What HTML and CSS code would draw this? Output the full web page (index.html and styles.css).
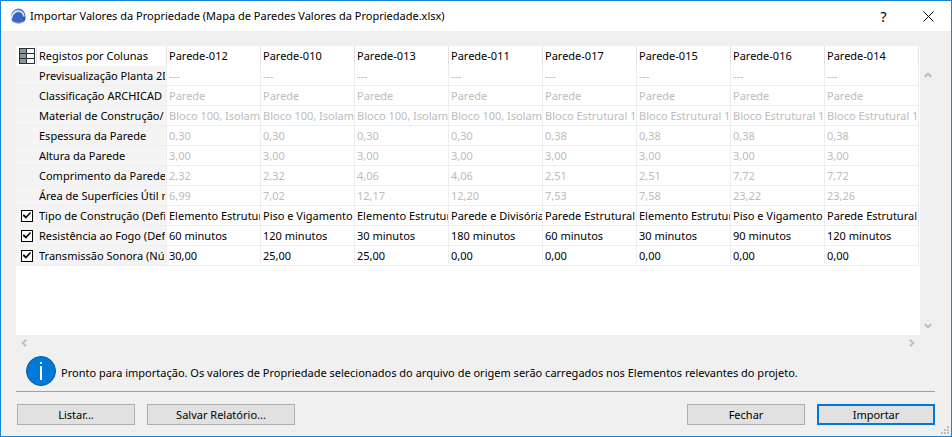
FILE: index.html
```html
<!DOCTYPE html>
<html lang="pt">
<head>
    <meta charset="UTF-8">
    <title>Importar Valores da Propriedade</title>
    <link rel="stylesheet" href="styles.css">
</head>
<body>
<div class="dialog">
    <header class="titlebar">
        <svg class="logo" width="16" height="16" viewBox="0 0 16 16">
            <defs>
                <linearGradient id="blue" x1="0" y1="0" x2="1" y2="1">
                    <stop offset="0" stop-color="#6f9be0"/>
                    <stop offset="1" stop-color="#1e48ac"/>
                </linearGradient>
            </defs>
            <path d="M1.500 12.500C-.5 6 3 .5 8.500.5c4.500 0 7 4 7 9 0 2-.8 3.500-1.800 4.500z" fill="url(#blue)"/>
            <path d="M1 11.500C2 6 5 3 8.400 3c3 0 5 2.200 5.600 5.500" fill="none" stroke="#dfe8f8" stroke-width="1.600"/>
            <path d="M2 12.800C3 7.500 5.700 4.800 8.200 4.900c3.600.2 5.300 4.600 5.400 9-3.200 2.200-8.600 2.400-11.600-1.100z" fill="#3a66c2"/>
            <path d="M2 13c3 2.600 8 2.800 11.400.8" fill="none" stroke="#b9c8e6"/>
        </svg>
        <h1>Importar Valores da Propriedade (Mapa de Paredes Valores da Propriedade.xlsx)</h1>
        <button class="tool help" type="button">?</button>
        <button class="tool" type="button" aria-label="Fechar janela">
            <svg width="11" height="11" viewBox="0 0 11 11"><path d="M.5.5l10 10M10.500.5l-10 10" fill="none" stroke="#000"/></svg>
        </button>
    </header>

    <main>
        <div class="list">
            <div class="sheet">
                <table>
                    <colgroup>
                        <col class="col-check">
                        <col class="col-name">
                        <col span="8">
                    </colgroup>
                    <thead>
                    <tr>
                        <th class="pick">
                            <svg width="16" height="16" viewBox="0 0 16 16">
                                <rect x="0" y="0" width="16" height="16" fill="#fff"/>
                                <rect x="0" y="0" width="8" height="16" fill="#8d9698"/>
                                <path d="M0 .5h16M0 5.500h16M0 10.500h16M0 15.500h16M.5 0v16M7.500 0v16M15.500 0v16" fill="none" stroke="#263238"/>
                            </svg>
                        </th>
                        <th>Registos por Colunas</th>
                        <th>Parede-012</th><th>Parede-010</th><th>Parede-013</th><th>Parede-011</th>
                        <th>Parede-017</th><th>Parede-015</th><th>Parede-016</th><th>Parede-014</th>
                    </tr>
                    </thead>
                    <tbody>
                    <tr class="off">
                        <td class="pick"></td><th><span>Previsualização Planta 2D</span></th>
                        <td>---</td><td>---</td><td>---</td><td>---</td><td>---</td><td>---</td><td>---</td><td>---</td>
                    </tr>
                    <tr class="off">
                        <td class="pick"></td><th><span>Classificação ARCHICAD -</span></th>
                        <td>Parede</td><td>Parede</td><td>Parede</td><td>Parede</td><td>Parede</td><td>Parede</td><td>Parede</td><td>Parede</td>
                    </tr>
                    <tr class="off">
                        <td class="pick"></td><th><span>Material de Construção/</span></th>
                        <td>Bloco 100, Isolam</td><td>Bloco 100, Isolam</td><td>Bloco 100, Isolam</td><td>Bloco 100, Isolam</td>
                        <td>Bloco Estrutural 1</td><td>Bloco Estrutural 1</td><td>Bloco Estrutural 1</td><td>Bloco Estrutural 1</td>
                    </tr>
                    <tr class="off">
                        <td class="pick"></td><th><span>Espessura da Parede</span></th>
                        <td>0,30</td><td>0,30</td><td>0,30</td><td>0,30</td><td>0,38</td><td>0,38</td><td>0,38</td><td>0,38</td>
                    </tr>
                    <tr class="off">
                        <td class="pick"></td><th><span>Altura da Parede</span></th>
                        <td>3,00</td><td>3,00</td><td>3,00</td><td>3,00</td><td>3,00</td><td>3,00</td><td>3,00</td><td>3,00</td>
                    </tr>
                    <tr class="off">
                        <td class="pick"></td><th><span>Comprimento da Parede</span></th>
                        <td>2,32</td><td>2,32</td><td>4,06</td><td>4,06</td><td>2,51</td><td>2,51</td><td>7,72</td><td>7,72</td>
                    </tr>
                    <tr class="off">
                        <td class="pick"></td><th><span>Área de Superfícies Útil n</span></th>
                        <td>6,99</td><td>7,02</td><td>12,17</td><td>12,20</td><td>7,53</td><td>7,58</td><td>23,22</td><td>23,26</td>
                    </tr>
                    <tr>
                        <td class="pick"><input type="checkbox" id="tipo" checked></td><th><label for="tipo">Tipo de Construção (Defi</label></th>
                        <td>Elemento Estrutur</td><td>Piso e Vigamento</td><td>Elemento Estrutur</td><td>Parede e Divisória</td>
                        <td>Parede Estrutural</td><td>Elemento Estrutur</td><td>Piso e Vigamento</td><td>Parede Estrutural</td>
                    </tr>
                    <tr>
                        <td class="pick"><input type="checkbox" id="fogo" checked></td><th><label for="fogo">Resistência ao Fogo (Def</label></th>
                        <td>60 minutos</td><td>120 minutos</td><td>30 minutos</td><td>180 minutos</td>
                        <td>60 minutos</td><td>30 minutos</td><td>90 minutos</td><td>120 minutos</td>
                    </tr>
                    <tr>
                        <td class="pick"><input type="checkbox" id="som" checked></td><th><label for="som">Transmissão Sonora (Núm</label></th>
                        <td>30,00</td><td>25,00</td><td>25,00</td><td>0,00</td><td>0,00</td><td>0,00</td><td>0,00</td><td>0,00</td>
                    </tr>
                    </tbody>
                </table>
            </div>
            <div class="scroll-y">
                <svg width="8" height="6" viewBox="0 0 8 6"><path d="M.7 5L4 1.700 7.300 5"/></svg>
                <svg width="8" height="6" viewBox="0 0 8 6"><path d="M.7 1L4 4.300 7.300 1"/></svg>
            </div>
            <div class="scroll-x">
                <svg width="6" height="8" viewBox="0 0 6 8"><path d="M5 .7L1.700 4 5 7.300"/></svg>
                <svg width="6" height="8" viewBox="0 0 6 8"><path d="M1 .7L4.300 4 1 7.300"/></svg>
            </div>
        </div>

        <div class="info">
            <svg width="30" height="30" viewBox="0 0 30 30">
                <circle cx="15" cy="15" r="14.500" fill="#0078d7" stroke="#0a5a9e"/>
                <path d="M14 6h2v2h-2zM14 10h2v14h-2z" fill="#fff"/>
            </svg>
            <p>Pronto para importação. Os valores de Propriedade selecionados do arquivo de origem serão carregados nos Elementos relevantes do projeto.</p>
        </div>
    </main>

    <footer>
        <button class="btn" type="button">Listar...</button>
        <button class="btn wide" type="button">Salvar Relatório...</button>
        <span class="space"></span>
        <button class="btn" type="button">Fechar</button>
        <button class="btn default" type="button">Importar</button>
    </footer>
    <svg class="grip" width="8" height="8" viewBox="0 0 8 8">
        <path d="M6 0h2v2H6zM3 3h2v2H3zM6 3h2v2H6zM0 6h2v2H0zM3 6h2v2H3zM6 6h2v2H6z" fill="#bfbfbf"/>
    </svg>
</div>
</body>
</html>
```
FILE: styles.css
```css
*{
    box-sizing: border-box;
    margin: 0;
    padding: 0;
}
body{
    font: 11px/20px "Noto Sans", "Open Sans", sans-serif;
    color: #000;
}
.dialog{
    position: relative;
    display: flex;
    flex-direction: column;
    min-height: 100vh;
    border: 1px solid #1883d7;
    background: #f0f0f0;
}
.titlebar{
    display: flex;
    align-items: center;
    height: 30px;
    padding-left: 9px;
    background: #fff;
}
.titlebar h1{
    flex: 1;
    padding-left: 4px;
    font-size: 11px;
    font-weight: normal;
    white-space: nowrap;
}
.tool{
    width: 45px;
    height: 30px;
    border: 0;
    background: none;
    font: 14px "Noto Sans", sans-serif;
}
main{
    padding: 15px 16px 0 15px;
}
.list{
    display: grid;
    grid-template-columns: 1fr 15px;
    grid-template-rows: 289px 16px;
}
.sheet{
    overflow: hidden;
    padding-right: 1px;
    background: #fff;
}
table{
    width: 100%;
    table-layout: fixed;
    border-collapse: separate;
    border-spacing: 0;
}
.col-check{
    width: 21px;
}
.col-name{
    width: 130px;
}
th, td{
    height: 20px;
    padding: 0 0 0 2px;
    border-right: 1px solid #ededed;
    border-bottom: 1px solid #ededed;
    font-weight: normal;
    line-height: 19px;
    text-align: left;
    white-space: nowrap;
    overflow: hidden;
}
thead th{
    border-right-color: #e0e0e0;
    border-bottom-color: #fff;
}
tbody th, tbody .pick{
    background: #f4f4f4;
}
tbody th{
    padding-right: 1px;
}
tbody th span, tbody th label{
    display: block;
    overflow: hidden;
}
tbody .pick{
    border-right-color: #f4f4f4;
}
.off td{
    color: #bcbcbc;
}
.pick{
    padding: 0 0 0 3px;
}
.pick svg{
    display: block;
}
input{
    display: block;
    position: relative;
    width: 12px;
    height: 12px;
    margin-left: 2px;
    border: 1px solid #000;
    background: #fff;
    appearance: none;
}
input:checked::after{
    content: "";
    position: absolute;
    inset: 1px;
    background: #000;
    clip-path: polygon(0 45%, 12% 35%, 37% 58%, 88% 5%, 100% 20%, 37% 92%, 0 55%);
}
.scroll-y, .scroll-x{
    display: flex;
    align-items: center;
    justify-content: space-between;
}
.scroll-y{
    flex-direction: column;
    padding: 26px 0 6px;
}
.scroll-x{
    padding: 0 5px;
}
.scroll-y path, .scroll-x path{
    fill: none;
    stroke: #bfbfbf;
    stroke-width: 2;
}
.info{
    display: flex;
    align-items: center;
    gap: 5px;
    height: 41px;
    padding-left: 10px;
    border-bottom: 1px solid #a0a0a0;
}
.info p{
    padding-top: 4px;
}
footer{
    display: flex;
    gap: 12px;
    padding: 12px 16px 11px;
}
.btn{
    width: 118px;
    height: 21px;
    border: 1px solid #adadad;
    background: #e1e1e1;
    font: inherit;
    line-height: 18px;
}
.wide{
    width: 148px;
}
.space{
    flex: 1;
}
.default{
    border: 2px solid #0078d7;
}
.grip{
    position: absolute;
    right: 2px;
    bottom: 2px;
}
```
